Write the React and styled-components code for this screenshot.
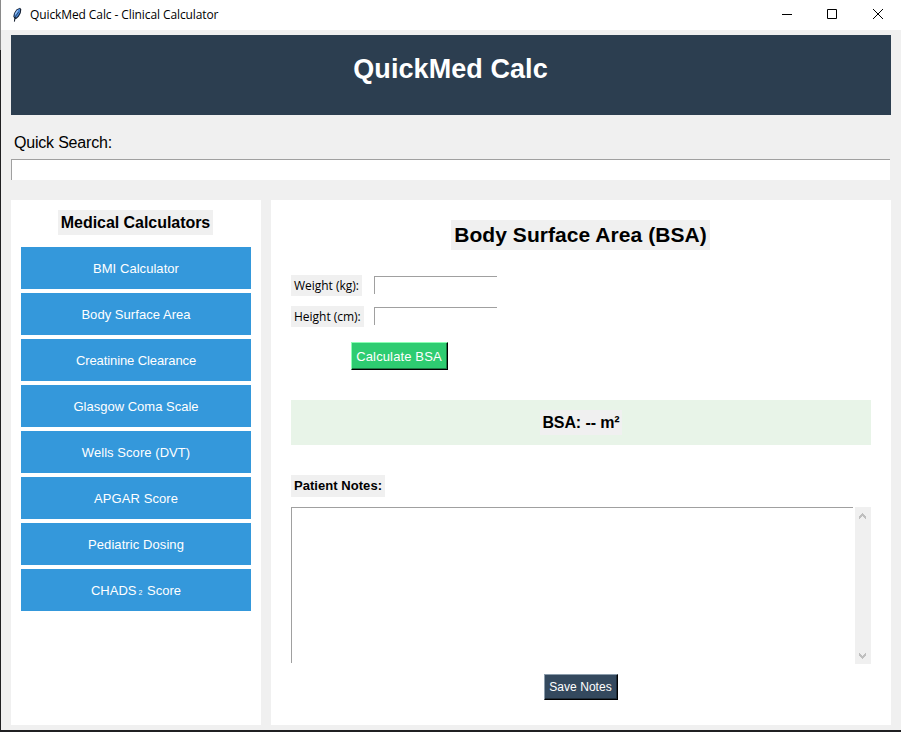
import React from "react";
import styled, { createGlobalStyle } from "styled-components";

const GlobalStyle = createGlobalStyle`
  * { box-sizing: border-box; }
  body { margin: 0; overflow: hidden; background: #202022; }
  button, input, textarea { font: inherit; border-radius: 0; outline: none; margin: 0; padding: 0; }
`;

const Desktop = styled.div`
  width: 901px;
  height: 732px;
  padding: 0 0 2px 1px;
  background: linear-gradient(#8a8a8a 0 50px, #202022 50px);
`;

const Window = styled.main`
  height: 730px;
  display: flex;
  flex-direction: column;
  background: #f0f0f0;
  color: #000;
  font-family: "Liberation Sans", Arial, sans-serif;
`;

const TitleBar = styled.header`
  height: 30px;
  flex: none;
  display: flex;
  align-items: center;
  justify-content: space-between;
  background: #fff;
`;

const WindowTitle = styled.div`
  display: flex;
  align-items: center;
  gap: 5px;
  padding-left: 8px;
  font: 12px/16px "Open Sans", "Noto Sans", sans-serif;
  letter-spacing: -0.1px;
`;

const WindowControls = styled.div`
  display: flex;
`;

const ControlButton = styled.button`
  width: 46px;
  height: 30px;
  display: grid;
  place-items: center;
  border: 0;
  background: transparent;
  svg { display: block; position: relative; top: -1px; }
`;

const Body = styled.div`
  flex: 1;
  display: flex;
  flex-direction: column;
  padding: 5px 10px;
`;

const Banner = styled.h1`
  height: 80px;
  margin: 0;
  padding: 17px 1px 0 0;
  background: #2c3e50;
  color: #fff;
  font-size: 27px;
  line-height: 34px;
  text-align: center;
  letter-spacing: 0.07px;
`;

const SearchLabel = styled.label`
  margin-top: 17px;
  height: 27px;
  padding-left: 3px;
  font-size: 16px;
  line-height: 21px;
  letter-spacing: ${(p) => p.$spacing || 0}px;
`;

const Entry = styled.input`
  display: block;
  width: ${(p) => p.$width};
  height: ${(p) => p.$height}px;
  border: 0 solid #a0a0a0;
  border-width: 1px 0 0 1px;
  background: #fff;
`;

const Panels = styled.div`
  flex: 1;
  display: grid;
  grid-template-columns: 250px 620px;
  gap: 10px;
  margin-top: 20px;
`;

const Sidebar = styled.nav`
  display: flex;
  flex-direction: column;
  padding: 10px;
  background: #fff;
`;

const Label = styled.div`
  width: ${(p) => p.$width}px;
  height: ${(p) => p.$height}px;
  background: #f0f0f0;
  font-size: ${(p) => p.$size}px;
  font-weight: bold;
  line-height: ${(p) => p.$height}px;
  letter-spacing: ${(p) => p.$spacing || 0}px;
  text-align: center;
  white-space: nowrap;
`;

const SidebarTitle = styled(Label)`
  align-self: center;
  margin: 0 1px 12px 0;
`;

const CalculatorList = styled.div`
  display: flex;
  flex-direction: column;
  gap: 4px;
`;

const CalculatorButton = styled.button`
  height: 42px;
  padding: 1px 0 0;
  border: 0;
  background: #3498db;
  color: #fff;
  font-size: 13px;
  line-height: 17px;
  letter-spacing: ${(p) => p.$spacing}px;
`;

const Subscript = styled.span`
  display: inline-block;
  width: 7px;
  padding-left: 2px;
  font-size: 7px;
  line-height: 7px;
  text-align: left;
`;

const Content = styled.section`
  display: flex;
  flex-direction: column;
  padding: 20px 20px 25px;
  background: #fff;
`;

const ContentTitle = styled(Label)`
  align-self: center;
  margin-right: 1px;
`;

const Form = styled.div`
  display: flex;
  flex-direction: column;
  gap: 10px;
  margin-top: 25px;
`;

const Field = styled.div`
  height: 21px;
  display: grid;
  grid-template-columns: 83px 123px;
`;

const FieldLabel = styled.label`
  width: ${(p) => p.$width}px;
  height: 21px;
  padding-left: 3px;
  background: #f0f0f0;
  font: 12px/21px "Open Sans", "Noto Sans", sans-serif;
  letter-spacing: ${(p) => p.$spacing}px;
  white-space: nowrap;
`;

const FieldEntry = styled(Entry)`
  margin-top: 1px;
`;

const RaisedButton = styled.button`
  width: ${(p) => p.$width}px;
  height: ${(p) => p.$height}px;
  padding: ${(p) => p.$drop || 0}px 1px 0 0;
  border: 1px solid;
  border-color: ${(p) => p.$light} #000 #000 ${(p) => p.$light};
  box-shadow: inset -1px -1px 0 ${(p) => p.$shade};
  background: ${(p) => p.$color};
  color: #fff;
  font-size: ${(p) => p.$size}px;
  line-height: 16px;
  letter-spacing: ${(p) => p.$spacing}px;
  white-space: nowrap;
`;

const CalculateButton = styled(RaisedButton)`
  margin: 15px 0 0 60px;
`;

const SaveButton = styled(RaisedButton)`
  align-self: center;
  margin-top: 10px;
`;

const Result = styled.div`
  height: 45px;
  margin-top: 30px;
  display: grid;
  place-items: center;
  background: #e8f4e8;
`;

const NotesTitle = styled(Label)`
  margin-top: 30px;
`;

const NotesArea = styled.div`
  height: 157px;
  display: grid;
  grid-template-columns: 562px 16px;
  gap: 2px;
  margin-top: 10px;
`;

const NotesText = styled.textarea`
  height: 156px;
  resize: none;
  border: 0 solid #a0a0a0;
  border-width: 1px 0 0 1px;
  background: #fff;
  overflow: hidden;
`;

const Scrollbar = styled.div`
  display: flex;
  flex-direction: column;
  justify-content: space-between;
  padding: 6px 4px 5px;
  background: #f0f0f0;
  svg { display: block; }
`;

const FeatherIcon = () => (
  <svg width="16" height="16" viewBox="0 0 16 16">
    <path d="M5 14 5.4 11.5 4.3 9.5 5 6.2 7.4 2.5 11 .7 12.3 2.2 11.8 6 9.9 9.5 7.6 11.8 6.2 12 5.8 15Z" fill="#172235" />
    <path d="M5.4 9.8 5.7 6.7 8.1 3 11 1.5 10.9 5.2 9.1 8.7 7 10.8Z" fill="#4e8ede" />
    <path d="M5.4 14.5 6.7 9.2 9.8 4.7" fill="none" stroke="#111b29" strokeWidth=".6" />
    <path d="M6.2 7.4 8.7 3.2" stroke="#a9cbf5" strokeWidth="1.1" />
  </svg>
);

const Arrow = ({ down }) => (
  <svg width="8" height="6" viewBox="0 0 8 6" shapeRendering="crispEdges">
    <path
      d={down ? "M0 0h1v1h1v1h1v1h1v-1h1v-1h1v-1h1v3h-1v1h-1v1h-1v1h-1v-1h-1v-1h-1v-1h-1z" : "M0 6v-3h1v-1h1v-1h1v-1h1v1h1v1h1v1h1v3h-1v-1h-1v-1h-1v-1h-1v1h-1v1h-1v1z"}
      fill="#bfbfbf"
    />
  </svg>
);

const calculators = [
  { name: "BMI Calculator", spacing: 0.05 },
  { name: "Body Surface Area", spacing: 0.05 },
  { name: "Creatinine Clearance", spacing: -0.1 },
  { name: "Glasgow Coma Scale", spacing: 0 },
  { name: "Wells Score (DVT)", spacing: 0.06 },
  { name: "APGAR Score", spacing: 0.1 },
  { name: "Pediatric Dosing", spacing: 0.08 },
  { name: <>CHADS<Subscript>2</Subscript> Score</>, spacing: 0 },
];

export default function App() {
  return (
    <Desktop>
      <GlobalStyle />
      <Window>
        <TitleBar>
          <WindowTitle><FeatherIcon />QuickMed Calc - Clinical Calculator</WindowTitle>
          <WindowControls>
            <ControlButton aria-label="Minimize">
              <svg width="12" height="10"><path d="M2 5h10v1H2z" /></svg>
            </ControlButton>
            <ControlButton aria-label="Maximize">
              <svg width="10" height="10"><path d="M.5.5h9v9h-9z" fill="none" stroke="#000" /></svg>
            </ControlButton>
            <ControlButton aria-label="Close">
              <svg width="10" height="10"><path d="m0 0 10 10M10 0 0 10" fill="none" stroke="#000" /></svg>
            </ControlButton>
          </WindowControls>
        </TitleBar>
        <Body>
          <Banner>QuickMed Calc</Banner>
          <SearchLabel htmlFor="search" $spacing={-0.2}>Quick Search:</SearchLabel>
          <Entry id="search" $width="879px" $height={21} />
          <Panels>
            <Sidebar>
              <SidebarTitle $width={155} $height={25} $size={16} $spacing={-0.05}>Medical Calculators</SidebarTitle>
              <CalculatorList>
                {calculators.map((item, i) => (
                  <CalculatorButton key={i} $spacing={item.spacing}>{item.name}</CalculatorButton>
                ))}
              </CalculatorList>
            </Sidebar>
            <Content>
              <ContentTitle $width={259} $height={30} $size={21} $spacing={0.05}>Body Surface Area (BSA)</ContentTitle>
              <Form>
                <Field>
                  <FieldLabel htmlFor="weight" $width={71} $spacing={-0.02}>Weight (kg):</FieldLabel>
                  <FieldEntry id="weight" $width="123px" $height={18} />
                </Field>
                <Field>
                  <FieldLabel htmlFor="height" $width={73} $spacing={-0.02}>Height (cm):</FieldLabel>
                  <FieldEntry id="height" $width="123px" $height={18} />
                </Field>
              </Form>
              <CalculateButton $width={97} $height={28} $size={13} $drop={1} $spacing={0.13} $light="#8cffb4" $shade="#1b7a43" $color="#2ecc71">
                Calculate BSA
              </CalculateButton>
              <Result>
                <Label $width={82} $height={25} $size={16} $spacing={-0.1}>BSA: -- m²</Label>
              </Result>
              <NotesTitle $width={94} $height={22} $size={13} $spacing={0.05}>Patient Notes:</NotesTitle>
              <NotesArea>
                <NotesText aria-label="Patient Notes" />
                <Scrollbar><Arrow /><Arrow down /></Scrollbar>
              </NotesArea>
              <SaveButton $width={74} $height={26} $size={12} $spacing={0.06} $light="#8b9cab" $shade="#1f2c38" $color="#34495e">
                Save Notes
              </SaveButton>
            </Content>
          </Panels>
        </Body>
      </Window>
    </Desktop>
  );
}
